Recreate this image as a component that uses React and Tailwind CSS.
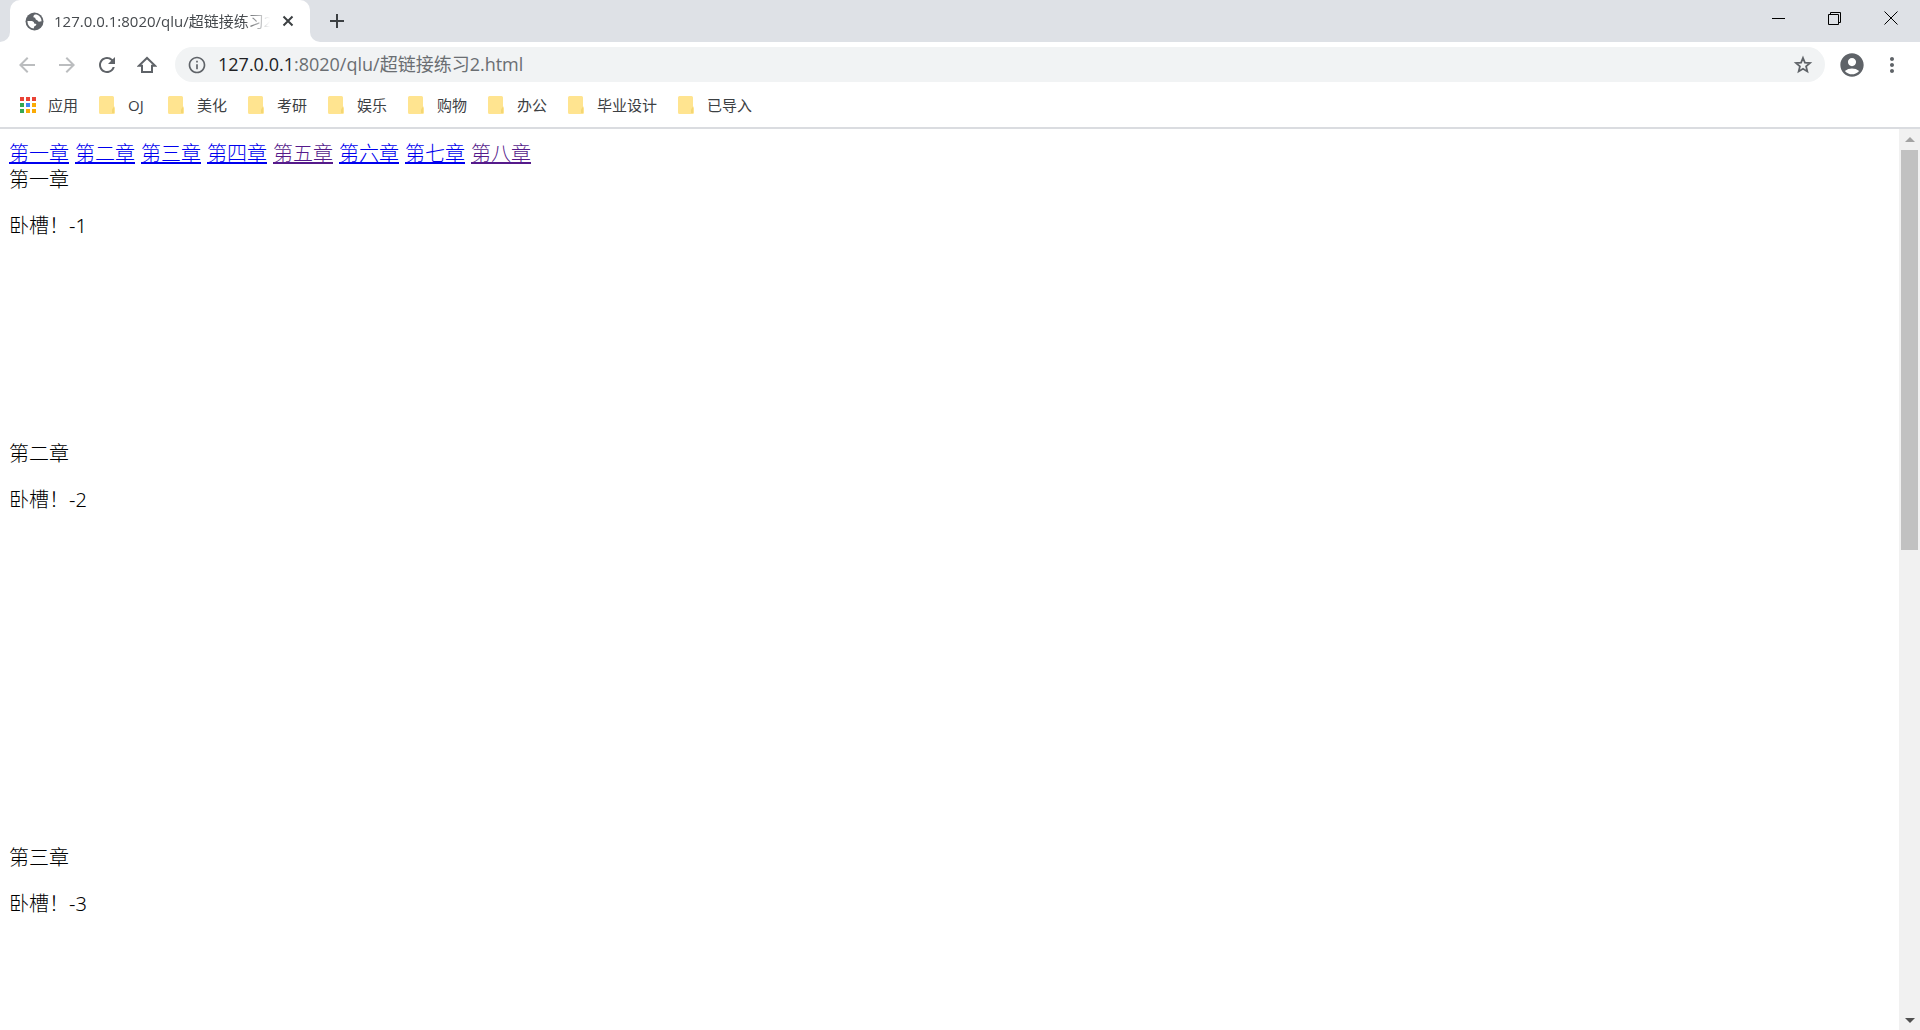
import React from "react";
import {
  MdArrowBack,
  MdArrowForward,
  MdRefresh,
  MdInfoOutline,
  MdAccountCircle,
  MdMoreVert,
} from "react-icons/md";

const bookmarks = ["OJ", "美化", "考研", "娱乐", "购物", "办公", "毕业设计", "已导入"];

const links = [
  { label: "第一章", visited: false },
  { label: "第二章", visited: false },
  { label: "第三章", visited: false },
  { label: "第四章", visited: false },
  { label: "第五章", visited: true },
  { label: "第六章", visited: false },
  { label: "第七章", visited: false },
  { label: "第八章", visited: true },
];

const chapters = [
  { title: "第一章", text: "卧槽！-1", space: "min-h-[274px]" },
  { title: "第二章", text: "卧槽！-2", space: "min-h-[404px]" },
  { title: "第三章", text: "卧槽！-3", space: "min-h-[160px]" },
];

const appColors = [
  "bg-[#ea4335]", "bg-[#ea4335]", "bg-[#ea4335]",
  "bg-[#34a853]", "bg-[#4285f4]", "bg-[#fbab05]",
  "bg-[#34a853]", "bg-[#fbab05]", "bg-[#fbab05]",
];

function GlobeIcon() {
  return (
    <svg className="mr-[10px] shrink-0" width="19" height="19" viewBox="0 0 19 19" aria-hidden="true">
      <circle cx="9.5" cy="9.5" r="9" fill="#5f6368" />
      <path
        d="M9.8 2.6 Q8 3.6 8.4 5.2 Q10.6 5.2 10.8 7.4 L12.6 8.4 Q13.4 10.2 15 9.6 L16.6 9.2 Q16.2 4.2 11.6 2.6Z M2.4 9 L7 9 Q9.4 9.6 9.2 11.4 L11.4 12 Q11.4 14 9.4 14.2 L8.6 16.6 Q2.6 15.4 2.4 9Z"
        fill="#fff"
      />
    </svg>
  );
}

function HomeIcon() {
  return (
    <svg width="20" height="20" viewBox="0 0 20 20" fill="none" stroke="#5f6368" strokeWidth="2" aria-hidden="true">
      <path d="M1.8 10.8 H5 V17 H15 V10.8 H18.2 L10 3 Z" />
    </svg>
  );
}

function StarIcon() {
  return (
    <svg width="20" height="20" viewBox="0 0 20 20" fill="none" stroke="#5f6368" strokeWidth="1.8" aria-hidden="true">
      <path d="M10 3 L11.9 7.7 L17 8.1 L13.1 11.4 L14.3 16.4 L10 13.7 L5.7 16.4 L6.9 11.4 L3 8.1 L8.1 7.7 Z" />
    </svg>
  );
}

function FolderIcon() {
  return (
    <svg width="16" height="18" viewBox="0 0 16 18" aria-hidden="true">
      <path d="M1.5 0 H13.5 Q15 0 15 1.5 V10 L16 12 V16.5 Q16 18 14.5 18 H1.5 Q0 18 0 16.5 V1.5 Q0 0 1.5 0Z" fill="#ffe490" />
      <path d="M13 17 V13.5 L15 10.5 V17Z" fill="#f3d673" />
    </svg>
  );
}

function TabStrip() {
  return (
    <header className="flex h-[42px] shrink-0 items-stretch bg-[#dee1e6]">
      <div className="flex w-[10px] items-end bg-white">
        <div className="h-full w-full rounded-br-[10px] bg-[#dee1e6]" />
      </div>
      <div className="bg-[#dee1e6]">
        <div className="flex h-full w-[300px] items-center rounded-t-[10px] bg-white pl-[15px] pr-3">
          <GlobeIcon />
          <span className="w-[218px] overflow-hidden whitespace-nowrap text-[15px] leading-5 text-[#45494d] [mask-image:linear-gradient(to_right,black_88%,transparent)]">
            127.0.0.1:8020/qlu/超链接练习2.html
          </span>
          <button aria-label="关闭标签页" className="ml-2 flex size-5 shrink-0 items-center justify-center">
            <svg width="12" height="12" viewBox="0 0 12 12" stroke="#3c4043" strokeWidth="2" aria-hidden="true">
              <path d="M1.5 1.5 L10.5 10.5 M10.5 1.5 L1.5 10.5" />
            </svg>
          </button>
        </div>
      </div>
      <div className="flex w-[10px] bg-white">
        <div className="h-full w-full rounded-bl-[10px] bg-[#dee1e6]" />
      </div>
      <button aria-label="新标签页" className="flex w-[34px] items-center justify-center">
        <svg width="16" height="16" viewBox="0 0 16 16" stroke="#3c4043" strokeWidth="2" aria-hidden="true">
          <path d="M8 1 V15 M1 8 H15" />
        </svg>
      </button>
      <div className="ml-auto flex h-9 text-black">
        <button aria-label="最小化" className="flex w-14 items-center justify-center">
          <svg width="13" height="13" viewBox="0 0 13 13" stroke="currentColor" aria-hidden="true">
            <path d="M0 6.5 H13" />
          </svg>
        </button>
        <button aria-label="还原" className="flex w-14 items-center justify-center">
          <svg width="13" height="13" viewBox="0 0 13 13" fill="none" stroke="currentColor" aria-hidden="true">
            <path d="M0.5 2.5 H10.5 V12.5 H0.5Z M2.5 2.5 V0.5 H12.5 V10.5 H10.5" />
          </svg>
        </button>
        <button aria-label="关闭" className="flex w-[58px] items-center justify-center">
          <svg width="14" height="14" viewBox="0 0 14 14" stroke="currentColor" aria-hidden="true">
            <path d="M0.5 0.5 L13.5 13.5 M13.5 0.5 L0.5 13.5" />
          </svg>
        </button>
      </div>
    </header>
  );
}

function Toolbar() {
  return (
    <nav className="flex h-[45px] shrink-0 items-center pl-[7px] pr-[14px]">
      <button aria-label="后退" className="flex w-10 justify-center text-[#bbbdbf]">
        <MdArrowBack className="size-6" />
      </button>
      <button aria-label="前进" className="flex w-10 justify-center text-[#bbbdbf]">
        <MdArrowForward className="size-6" />
      </button>
      <button aria-label="重新加载" className="flex w-10 justify-center text-[#5f6368]">
        <MdRefresh className="size-6" />
      </button>
      <button aria-label="主页" className="flex w-10 justify-center">
        <HomeIcon />
      </button>
      <div className="ml-2 flex h-[35px] flex-1 items-center rounded-full bg-[#f1f3f4] pl-3 pr-3">
        <MdInfoOutline className="mr-[11px] size-5 shrink-0 text-[#5f6368]" />
        <span className="flex-1 whitespace-nowrap pb-px text-[18px] leading-6 text-[#6a6e72]">
          <span className="text-[#202124]">127.0.0.1</span>:8020/qlu/超链接练习2.html
        </span>
        <button aria-label="为此网页添加书签">
          <StarIcon />
        </button>
      </div>
      <button aria-label="用户" className="ml-[13px] flex w-7 justify-center text-[#5f6368]">
        <MdAccountCircle className="size-7" />
      </button>
      <button aria-label="菜单" className="ml-3 flex w-7 justify-center text-[#5f6368]">
        <MdMoreVert className="size-6" />
      </button>
    </nav>
  );
}

function BookmarksBar() {
  return (
    <nav className="flex h-[42px] shrink-0 items-center gap-[21px] border-b-2 border-[#dadce0] px-5 pb-1 text-[15px] leading-5 text-[#3c4043]">
      <a href="#apps" className="flex items-center gap-3">
        <span className="grid size-4 grid-cols-3 gap-[2px]">
          {appColors.map((color, i) => (
            <span key={i} className={color} />
          ))}
        </span>
        应用
      </a>
      {bookmarks.map((name) => (
        <button key={name} className="flex items-center gap-[13px]">
          <FolderIcon />
          <span className="min-w-[19px] text-left">{name}</span>
        </button>
      ))}
    </nav>
  );
}

function Scrollbar() {
  return (
    <div className="flex w-[21px] shrink-0 flex-col items-center bg-[#f1f1f1]" aria-hidden="true">
      <div className="flex h-[21px] items-center">
        <svg width="10" height="5" viewBox="0 0 10 5" fill="#a3a3a3"><path d="M5 0 L10 5 H0Z" /></svg>
      </div>
      <div className="min-h-0 w-[17px] flex-1">
        <div className="h-[46.5%] bg-[#c1c1c1]" />
      </div>
      <div className="flex h-5 items-center">
        <svg width="10" height="5" viewBox="0 0 10 5" fill="#505050"><path d="M0 0 H10 L5 5Z" /></svg>
      </div>
    </div>
  );
}

export default function App() {
  return (
    <div className="flex h-screen flex-col overflow-hidden bg-white font-['Open_Sans','Noto_Sans_CJK_SC',sans-serif]">
      <TabStrip />
      <Toolbar />
      <BookmarksBar />
      <div className="flex min-h-0 flex-1">
        <main className="min-w-0 flex-1 overflow-hidden px-[9px] py-3 font-['Noto_Sans','Noto_Sans_CJK_SC',sans-serif] text-[20px] font-light leading-[26px] text-black">
          <div className="flex flex-wrap gap-x-[6px]">
            {links.map((link, i) => (
              <a
                key={link.label}
                href={"#chapter-" + (i + 1)}
                className={
                  link.visited
                    ? "text-[#551a8b] underline decoration-2"
                    : "text-[#0000ee] underline decoration-2"
                }
              >
                {link.label}
              </a>
            ))}
          </div>
          {chapters.map((chapter, i) => (
            <section key={chapter.title} id={"chapter-" + (i + 1)} className={chapter.space}>
              <h2>{chapter.title}</h2>
              <p className="mt-5">{chapter.text}</p>
            </section>
          ))}
        </main>
        <Scrollbar />
      </div>
    </div>
  );
}
